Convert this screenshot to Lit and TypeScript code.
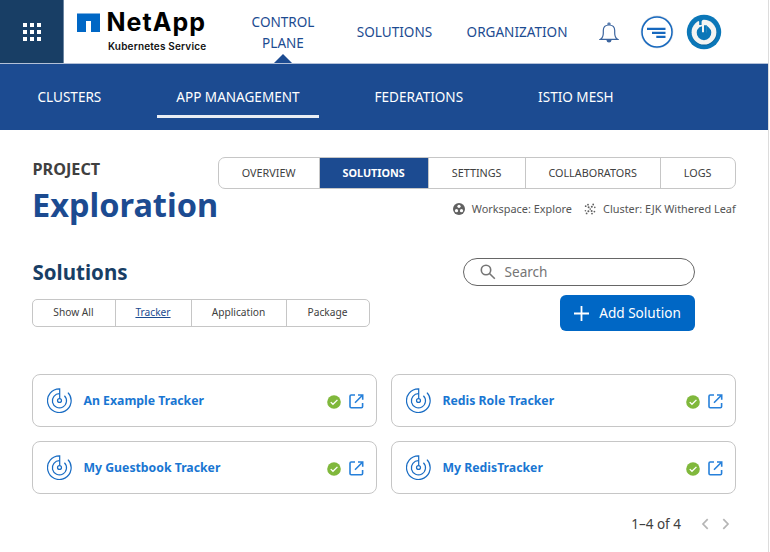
import { LitElement, html, css, svg } from "lit";
import { customElement, property } from "lit/decorators.js";
import { classMap } from "lit/directives/class-map.js";

const trackerIcon = svg`
  <g fill="none" stroke="#1a6dc4" stroke-width="1.25">
    <path d="M13.2 10.9V1.2A12 12 0 1 0 21.6 5"/>
    <path d="M13.2 6.1A7.2 7.2 0 1 0 18 8.2"/>
    <circle cx="13" cy="13" r="2"/>
  </g>`;

@customElement("solution-card")
export class SolutionCard extends LitElement {
  @property() name = "";

  static styles = css`
    :host {
      display: flex;
      align-items: center;
      box-sizing: border-box;
      border: 1px solid #c6c6c6;
      border-radius: 8px;
      padding: 0 12.5px 0 13.5px;
      background: #fff;
    }
    .name {
      flex: 1;
      margin-left: 12px;
      font-size: 12.25px;
      font-weight: 700;
      color: #1976d2;
      white-space: nowrap;
    }
    svg { display: block; flex: none; }
    .check { margin: 2px 7.5px 0 0; }
    .open { margin-top: 2px; }
  `;

  render() {
    return html`
      <svg width="25" height="25" viewBox="0.3 0.3 25.4 25.4">${trackerIcon}</svg>
      <span class="name">${this.name}</span>
      <svg class="check" width="14" height="14" viewBox="0 0 15 15">
        <circle cx="7.5" cy="7.5" r="7.3" fill="#80b83c"/>
        <path d="M4 7.6l2.4 2.4 4.8-4.8" fill="none" stroke="#fff" stroke-width="1.4"/>
      </svg>
      <svg class="open" width="15" height="15" viewBox="0 0 15 15">
        <path d="M6 1H2.2Q1 1 1 2.2V12.6Q1 13.8 2.2 13.8H12.4Q13.6 13.8 13.6 12.6V9M6 8.7L13.2 1.5M9 1H13.7V5.8" fill="none" stroke="#2680da" stroke-width="1.6"/>
      </svg>`;
  }
}

@customElement("app-root")
export class AppRoot extends LitElement {
  static styles = css`
    :host {
      display: block;
      box-sizing: border-box;
      width: 770px;
      height: 552px;
      overflow: hidden;
      background: #fff;
      font-family: "Noto Sans", sans-serif;
      color: #404040;
    }
    * { box-sizing: border-box; }
    svg { display: block; flex: none; }
    .page {
      width: 769px;
      height: 552px;
      border-right: 1px solid #dcdcdc;
    }
    .top {
      display: flex;
      height: 64px;
      border-bottom: 1px solid #b4c1d8;
      color: #1c4b91;
      font-size: 13.55px;
    }
    .apps {
      width: 64px;
      height: 63px;
      display: grid;
      place-items: center;
      background: #183e65;
      border-right: 1px solid #6c86a2;
    }
    .brand { width: 178px; padding: 13px 0 0 13px; }
    .logo { display: flex; align-items: flex-start; }
    .word {
      font: 700 25px/24px Inter, sans-serif;
      letter-spacing: 1.05px;
      color: #000;
      margin: -3px 0 0 6.5px;
    }
    .service {
      margin: 6px 0 0 31px;
      font: 600 10px/13px Inter, sans-serif;
      letter-spacing: 0.17px;
      color: #111;
      white-space: nowrap;
    }
    .main {
      display: flex;
      align-items: center;
      text-align: center;
      line-height: 21px;
    }
    .main span { display: block; white-space: nowrap; }
    .control {
      width: 82px;
      height: 63px;
      padding-top: 12px;
      display: flex;
      flex-direction: column;
      align-items: center;
      justify-content: space-between;
    }
    .m-sol { width: 141px; margin-top: 1px; }
    .m-org { width: 104px; margin-top: 1px; }
    .tools { display: flex; align-items: center; margin-left: 30px; }
    .bell { margin-top: 2px; }
    .round { margin: 1px 0 0 21px; }
    .avatar { margin: 1px 0 0 12px; }
    .sub {
      display: flex;
      height: 66px;
      padding-left: 18.5px;
      gap: 37px;
      background: #1c4b91;
      color: #fff;
      font-size: 13.55px;
    }
    .sub div {
      height: 53px;
      padding: 23px 19px 0;
      line-height: 20px;
      white-space: nowrap;
    }
    .sub div.on { border-bottom: 3px solid #e9eef5; height: 54px; }
    .content { padding: 27px 32px 0; }
    .head { display: flex; justify-content: space-between; }
    .project { font-size: 16.2px; line-height: 25px; font-weight: 700; padding-left: 0.5px; }
    h1 {
      margin: 0;
      font-size: 32.5px;
      line-height: 46px;
      font-weight: 700;
      color: #1c4b91;
    }
    .tabs {
      display: flex;
      border: 1px solid #c6c6c6;
      border-radius: 7px;
      overflow: hidden;
    }
    .tabs > div {
      display: grid;
      place-items: center;
      border-left: 1px solid #c6c6c6;
      padding: 0 1px 2px 0;
      white-space: nowrap;
    }
    .tabs > div:first-child { border-left: 0; }
    .big { width: 518px; height: 32px; font-size: 10.8px; }
    .big .on { background: #1c4b91; color: #fff; font-weight: 700; }
    .t0 { width: 100px; } .t1 { width: 109px; } .t2 { width: 97px; }
    .t3 { width: 135px; } .t4 { flex: 1; }
    .meta {
      display: flex;
      justify-content: flex-end;
      align-items: center;
      margin: 12px 0.5px 0 0;
      font-size: 10.9px;
      line-height: 16px;
      color: #555;
      white-space: nowrap;
    }
    .meta span { margin-left: 7px; }
    .meta span + svg { margin-left: 12px; }
    .tools2 { display: flex; justify-content: space-between; margin-top: 30px; }
    h2 {
      margin: 0;
      padding: 1px 0 0 0.5px;
      font-size: 20.5px;
      line-height: 27px;
      font-weight: 700;
      color: #183e65;
    }
    .small { width: 338px; height: 28px; margin-top: 13px; font-size: 10.2px; border-radius: 5px; }
    .small .on { color: #1c4b91; text-decoration: underline; }
    .s0 { width: 82px; } .s1 { width: 76px; } .s2 { width: 95px; } .s3 { flex: 1; }
    .actions { display: flex; flex-direction: column; align-items: flex-end; width: 232px; margin-right: 41px; }
    .search {
      display: flex;
      align-items: center;
      width: 232px;
      height: 28px;
      border: 1px solid #666;
      border-radius: 14px;
      padding-left: 15.5px;
      font-size: 13.6px;
      color: #757575;
    }
    .search span { margin-left: 9px; padding-bottom: 1px; }
    .add {
      display: flex;
      align-items: center;
      justify-content: center;
      gap: 10px;
      width: 135px;
      height: 36px;
      margin-top: 9px;
      border-radius: 6px;
      background: #0067c5;
      color: #fff;
      font-size: 13.6px;
      white-space: nowrap;
    }
    .add span { padding-bottom: 2px; }
    .cards {
      display: grid;
      grid-template-columns: 345px 345px;
      grid-template-rows: 53px 53px;
      gap: 14px 14px;
      margin-top: 43px;
    }
    .pager {
      display: flex;
      justify-content: flex-end;
      align-items: center;
      margin: 20px 6px 0 0;
      font-size: 13.5px;
      line-height: 20px;
    }
    .prev { margin-left: 20px; }
    .next { margin-left: 13px; }
  `;

  private tabs(names: string[], active: number, size: string, key: string) {
    return html`<div class="tabs ${size}">
      ${names.map((n, i) => html`<div class=${classMap({ [key + i]: true, on: i === active })}>${n}</div>`)}
    </div>`;
  }

  render() {
    return html`<div class="page">
      <div class="top">
        <div class="apps">
          <svg width="18" height="18" viewBox="0 0 18 18" fill="#fff">
            ${[0, 7, 14].map((y) => [0, 7, 14].map((x) => svg`<rect x=${x} y=${y} width="4" height="4"/>`))}
          </svg>
        </div>
        <div class="brand">
          <div class="logo">
            <svg width="23" height="19" viewBox="0 0 23 19"><path d="M0 .5H23V19H14V8H9V19H0Z" fill="#0067c5"/></svg>
            <div class="word">NetApp</div>
          </div>
          <div class="service">Kubernetes Service</div>
        </div>
        <div class="main">
          <div class="control">
            <div><span>CONTROL</span><span>PLANE</span></div>
            <svg width="18" height="9" viewBox="0 0 18 9"><path d="M0 9L9 0L18 9Z" fill="#1c4b91"/></svg>
          </div>
          <span class="m-sol">SOLUTIONS</span>
          <span class="m-org">ORGANIZATION</span>
        </div>
        <div class="tools">
          <svg class="bell" width="20" height="22" viewBox="0 0 20 22">
            <path d="M9 3V1.8Q9 1 10 1T11 1.8V3M1.5 17.3Q4.3 15.5 4.3 11V8.5Q4.3 3 10 3T15.7 8.5V11Q15.7 15.5 18.5 17.3Z" fill="none" stroke="#3c659f" stroke-width="1.2"/>
            <path d="M7.4 18H12.6Q12.3 20.5 10 20.5T7.4 18Z" fill="#3c659f"/>
          </svg>
          <svg class="round" width="34" height="34" viewBox="0 0 34 34">
            <circle cx="17" cy="17" r="16.4" fill="#d9dde3"/>
            <circle cx="17" cy="17" r="15" fill="#fff" stroke="#1668be" stroke-width="1.5"/>
            <path d="M7 13.8H25.5M12 17.8H25.5M16.3 21.8H25.5" stroke="#1668be" stroke-width="2.2"/>
          </svg>
          <svg class="avatar" width="36" height="36" viewBox="0 0 36 36">
            <circle cx="18" cy="18" r="17.2" fill="#0b77b8"/>
            <circle cx="18.3" cy="19" r="12.5" fill="#086097"/>
            <circle cx="18" cy="18.2" r="12.4" fill="#f4f4f2"/>
            <path d="M11.5 5H17.2L15.6 7.5V11H13.2V7.8Z" fill="#0b77b8"/>
            <path d="M13.4 13.2A7.3 7.3 0 1 0 22.6 13.2L20.6 11.4V18.2H16V12.2Z" fill="#0b77b8"/>
            <path d="M18 11.2H20.8V18.5Q19.4 19.6 18 18.9Z" fill="#0b77b8"/>
          </svg>
        </div>
      </div>
      <div class="sub">
        <div>CLUSTERS</div><div class="on">APP MANAGEMENT</div><div>FEDERATIONS</div><div>ISTIO MESH</div>
      </div>
      <div class="content">
        <div class="head">
          <div><div class="project">PROJECT</div><h1>Exploration</h1></div>
          <div>
            ${this.tabs(["OVERVIEW", "SOLUTIONS", "SETTINGS", "COLLABORATORS", "LOGS"], 1, "big", "t")}
            <div class="meta">
              <svg width="12" height="12" viewBox="0 0 12 12">
                <circle cx="6" cy="6" r="6" fill="#616161"/>
                <g fill="#fff"><circle cx="6" cy="3.3" r="1.6"/><circle cx="3.5" cy="7.7" r="1.6"/><circle cx="8.5" cy="7.7" r="1.6"/></g>
              </svg>
              <span>Workspace: Explore</span>
              <svg width="12" height="12" viewBox="0 0 12 12" fill="#616161">
                <circle cx="4" cy="1.7" r=".9"/><circle cx="9.2" cy="1.5" r=".9"/>
                <circle cx="1.7" cy="3.2" r=".9"/><circle cx="4.6" cy="4.2" r="1"/><circle cx="7.8" cy="3.8" r="1"/>
                <circle cx="10.8" cy="4.4" r=".8"/><circle cx="6.2" cy="6.1" r=".8"/>
                <circle cx="1.4" cy="7.8" r=".8"/><circle cx="4.4" cy="8.2" r="1"/><circle cx="7.6" cy="7.9" r="1"/><circle cx="10.4" cy="8.6" r=".9"/>
                <circle cx="2.6" cy="10.4" r=".9"/><circle cx="8" cy="10.6" r=".9"/>
              </svg>
              <span>Cluster: EJK Withered Leaf</span>
            </div>
          </div>
        </div>
        <div class="tools2">
          <div><h2>Solutions</h2>${this.tabs(["Show All", "Tracker", "Application", "Package"], 1, "small", "s")}</div>
          <div class="actions">
            <div class="search">
              <svg width="16" height="16" viewBox="0 0 16 16" fill="none" stroke="#757575" stroke-width="1.6">
                <circle cx="6" cy="6" r="4.7"/><path d="M9.5 9.5L14.8 14.8"/>
              </svg>
              <span>Search</span>
            </div>
            <div class="add">
              <svg width="15" height="15" viewBox="0 0 15 15"><path d="M7.5 0V15M0 7.5H15" stroke="#fff" stroke-width="1.8"/></svg>
              <span>Add Solution</span>
            </div>
          </div>
        </div>
        <div class="cards">
          ${["An Example Tracker", "Redis Role Tracker", "My Guestbook Tracker", "My RedisTracker"].map((n) => html`<solution-card .name=${n}></solution-card>`)}
        </div>
        <div class="pager">
          <span>1–4 of 4</span>
          <svg class="prev" width="8" height="12" viewBox="0 0 8 12"><path d="M6.7 1.2L2 6L6.7 10.8" fill="none" stroke="#b5b5b5" stroke-width="1.7"/></svg>
          <svg class="next" width="8" height="12" viewBox="0 0 8 12"><path d="M1.3 1.2L6 6L1.3 10.8" fill="none" stroke="#b5b5b5" stroke-width="1.7"/></svg>
        </div>
      </div>
    </div>`;
  }
}
